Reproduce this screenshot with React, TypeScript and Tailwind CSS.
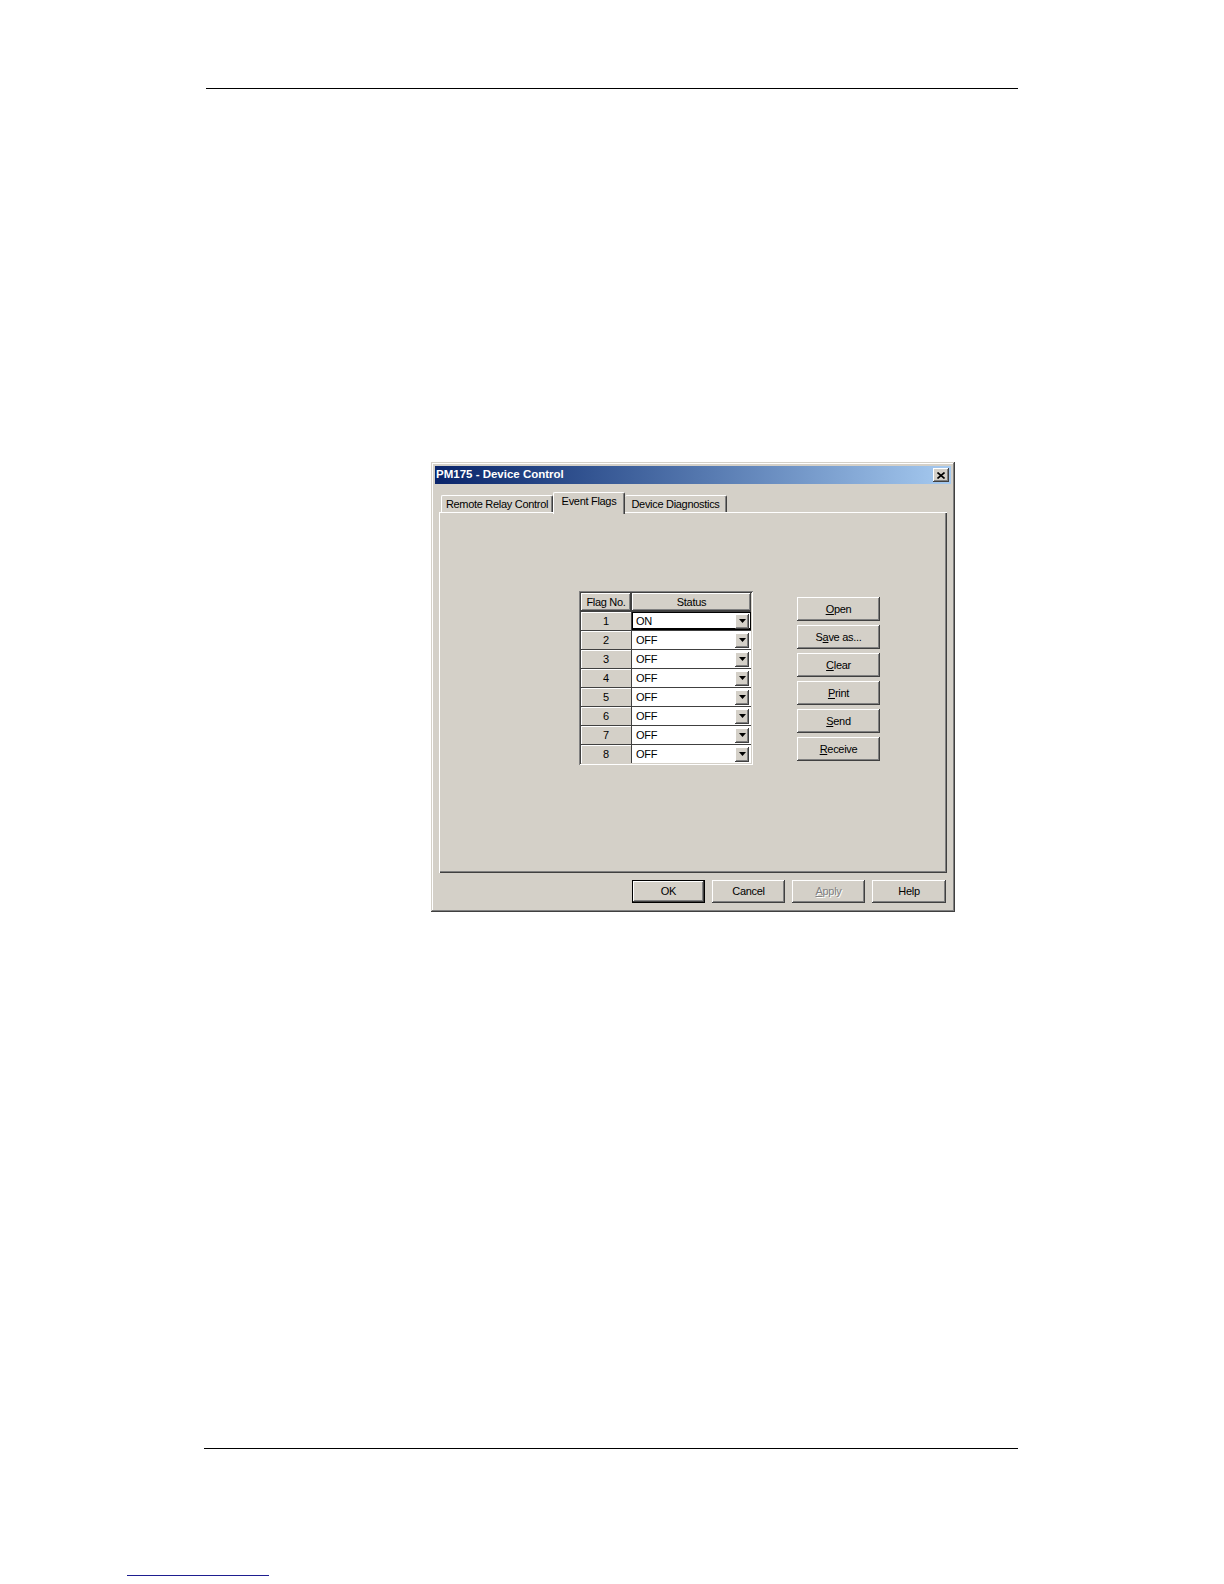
const raised =
  "bg-[#d4d0c8] shadow-[inset_-1px_-1px_#404040,inset_1px_1px_#ffffff,inset_-2px_-2px_#808080,inset_2px_2px_#d4d0c8]";

const flags = [
  { no: 1, status: "ON" },
  { no: 2, status: "OFF" },
  { no: 3, status: "OFF" },
  { no: 4, status: "OFF" },
  { no: 5, status: "OFF" },
  { no: 6, status: "OFF" },
  { no: 7, status: "OFF" },
  { no: 8, status: "OFF" },
];

const Mnemonic = ({ pre = "", key1, post = "" }: { pre?: string; key1: string; post?: string }) => (
  <span>
    {pre}
    <span className="underline underline-offset-[1px]">{key1}</span>
    {post}
  </span>
);

const SideButton = ({ children }: { children: React.ReactNode }) => (
  <div className={`${raised} w-[83px] h-[24px] flex items-center justify-center`}>{children}</div>
);

const DropArrow = () => (
  <div className={`${raised} w-[14px] h-[15px] flex items-center justify-center`}>
    <svg width="7" height="4" viewBox="0 0 7 4">
      <polygon points="0,0 7,0 3.5,4" fill="#000" />
    </svg>
  </div>
);

const FlagTable = () => (
  <div className="w-[174px] p-[2px] bg-[#d4d0c8] shadow-[inset_1px_1px_#808080,inset_-1px_-1px_#ffffff,inset_2px_2px_#404040,inset_-2px_-2px_#d4d0c8]">
    <div className="grid grid-cols-[50px_119px] gap-px bg-[#404040]">
      <div className={`${raised} h-[18px] flex items-center justify-center`}>Flag No.</div>
      <div className={`${raised} h-[18px] flex items-center justify-center`}>Status</div>
      {flags.map((f) => (
        <>
          <div
            key={`n${f.no}`}
            className="h-[18px] bg-[#d4d0c8] shadow-[inset_1px_1px_#ffffff] flex items-center justify-center"
          >
            {f.no}
          </div>
          <div
            key={`s${f.no}`}
            className={`h-[18px] bg-white flex items-center justify-between pl-[4px] pr-[2px] ${
              f.no === 1 ? "shadow-[inset_0_0_0_1px_#000000,inset_0_-2px_#000000]" : ""
            }`}
          >
            <span>{f.status}</span>
            <DropArrow />
          </div>
        </>
      ))}
    </div>
  </div>
);

const App = () => (
  <div className="w-[1224px] h-[1584px] bg-white overflow-hidden text-black font-['Liberation_Sans',Arial,sans-serif] text-[11px] tracking-[-0.3px] leading-none">
    <div className="pt-[88px]">
      <div className="ml-[206px] w-[812px] h-px bg-black" />
    </div>

    {/* Dialog */}
    <div className="mt-[373px] ml-[431px] w-[524px] h-[450px] p-[4px] bg-[#d4d0c8] shadow-[inset_-1px_-1px_#404040,inset_1px_1px_#d4d0c8,inset_-2px_-2px_#808080,inset_2px_2px_#ffffff] flex flex-col">
      {/* Title bar */}
      <div className="h-[18px] bg-gradient-to-r from-[#0a246a] to-[#a6caf0] flex items-center justify-between pl-[1px] pr-[2px]">
        <span className="text-white font-bold text-[11.5px] tracking-[0px]">PM175 - Device Control</span>
        <div className={`${raised} w-[16px] h-[14px] flex items-center justify-center`}>
          <svg width="8" height="7" viewBox="0 0 8 7">
            <path d="M0.5 0.5 L7.5 6.5 M7.5 0.5 L0.5 6.5" stroke="#000" strokeWidth="1.6" />
          </svg>
        </div>
      </div>

      {/* Tabs */}
      <div className="mt-[8px] mx-[4px] h-[20px] flex items-end pl-[2px]">
        <div className="w-[112px] h-[17px] border-l border-t border-white border-r border-r-[#404040] rounded-t-[2px] shadow-[inset_-1px_0_#808080] flex items-center justify-center">
          Remote Relay Control
        </div>
        <div className="relative z-10 w-[72px] h-[22px] -mb-[2px] bg-[#d4d0c8] border-l border-t border-white border-r border-r-[#404040] rounded-t-[2px] shadow-[inset_-1px_0_#808080] flex items-start justify-center pt-[3px]">
          Event Flags
        </div>
        <div className="w-[102px] h-[17px] border-t border-white border-r border-r-[#404040] rounded-t-[2px] shadow-[inset_-1px_0_#808080] flex items-center justify-center">
          Device Diagnostics
        </div>
      </div>

      {/* Panel */}
      <div className="mx-[4px] h-[361px] shadow-[inset_1px_1px_#ffffff,inset_-1px_-1px_#404040,inset_-2px_-2px_#808080] flex items-start pl-[140px] pt-[79px]">
        <FlagTable />
        <div className="ml-[44px] mt-[6px] flex flex-col gap-[4px]">
          <SideButton>
            <Mnemonic key1="O" post="pen" />
          </SideButton>
          <SideButton>
            <Mnemonic pre="S" key1="a" post="ve as..." />
          </SideButton>
          <SideButton>
            <Mnemonic key1="C" post="lear" />
          </SideButton>
          <SideButton>
            <Mnemonic key1="P" post="rint" />
          </SideButton>
          <SideButton>
            <Mnemonic key1="S" post="end" />
          </SideButton>
          <SideButton>
            <Mnemonic key1="R" post="eceive" />
          </SideButton>
        </div>
      </div>

      {/* Bottom buttons */}
      <div className="mt-[7px] mx-[4px] pr-[1px] flex justify-end gap-[7px]">
        <div className="w-[73px] h-[23px] border border-black">
          <div className={`${raised} w-full h-full flex items-center justify-center`}>OK</div>
        </div>
        <div className={`${raised} w-[73px] h-[23px] flex items-center justify-center`}>Cancel</div>
        <div className={`${raised} w-[73px] h-[23px] flex items-center justify-center text-[#808080] [text-shadow:1px_1px_#ffffff]`}>
          <Mnemonic key1="A" post="pply" />
        </div>
        <div className={`${raised} w-[74px] h-[23px] flex items-center justify-center`}>Help</div>
      </div>
    </div>

    <div className="mt-[536px] ml-[204px] w-[814px] h-px bg-black" />
    <div className="mt-[126px] ml-[127px] w-[142px] h-px bg-[#1e1e90]" />
  </div>
);

export default App;
